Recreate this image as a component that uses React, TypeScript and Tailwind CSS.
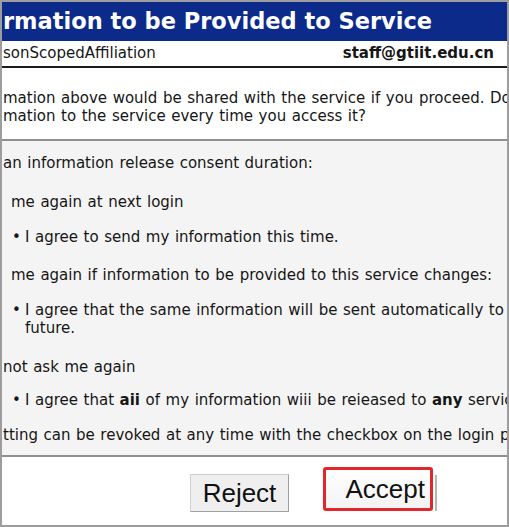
export default function App() {
  return (
    <div className="w-[509px] h-[527px] overflow-hidden bg-white border-2 border-[#9d9d9d] flex flex-col font-['DejaVu_Sans',Verdana,sans-serif] text-[15px] text-[#161616] [word-spacing:0.8px]">
      <div className="h-[39px] shrink-0 bg-[#0c2a8a] text-white font-bold text-[22.5px] leading-[39px] pl-[1px] whitespace-nowrap [word-spacing:0px]">
        rmation to be Provided to Service
      </div>
      <div className="h-[27px] shrink-0 flex items-center justify-between pl-[1px] pr-[13px] border-b-2 border-[#1b1b1b] whitespace-nowrap">
        <span>sonScopedAffiliation</span>
        <span className="font-bold">staff@gtiit.edu.cn</span>
      </div>
      <div className="h-[71px] shrink-0 pt-[21px] pl-[1px] leading-[18px] whitespace-nowrap overflow-hidden">
        <p>mation above would be shared with the service if you proceed. Do</p>
        <p>mation to the service every time you access it?</p>
      </div>
      <div className="shrink-0 h-[318px] bg-[#f4f4f4] border-y-2 border-[#8f8f8f] pt-[13px] pl-[1px] leading-[18px] whitespace-nowrap overflow-hidden">
        <p>an information release consent duration:</p>
        <p className="mt-[21px] pl-[8px]">me again at next login</p>
        <Bullet className="mt-[17px]">I agree to send my information this time.</Bullet>
        <p className="mt-[20px] pl-[8px]">me again if information to be provided to this service changes:</p>
        <Bullet className="mt-[17px]">
          I agree that the same information will be sent automatically to
          <br />
          future.
        </Bullet>
        <p className="mt-[21px]">not ask me again</p>
        <Bullet className="mt-[15px]">
          I agree that <b>aii</b> of my information wiii be reieased to <b>any</b> servic
        </Bullet>
        <p className="mt-[17px]">tting can be revoked at any time with the checkbox on the login p</p>
      </div>
      <div className="flex-1 flex items-start font-['Liberation_Sans',Arial,sans-serif] [word-spacing:0px]">
        <button className="mt-[17px] ml-[188px] w-[99px] h-[38px] bg-[#efefef] border border-[#a0a0a0] border-t-[#cfcfcf] border-l-[#cfcfcf] text-[26px] leading-none text-[#111]">
          Reject
        </button>
        <div className="mt-[10px] ml-[34px] w-[110px] h-[44px] border-[3px] border-[#e2262c] rounded-[3px] bg-gradient-to-b from-white to-[#f3f3f3] flex items-center justify-end pr-[5px] text-[26px] text-[#111]">
          Accept
        </div>
        <div className="mt-[18px] ml-[2px] w-[2px] h-[36px] bg-[#b5b5b5]" />
      </div>
    </div>
  )
}

function Bullet({ children, className }: { children: React.ReactNode; className?: string }) {
  return (
    <div className={`flex ${className ?? ''}`}>
      <span className="w-[22px] pl-[9px] shrink-0">•</span>
      <span>{children}</span>
    </div>
  )
}
